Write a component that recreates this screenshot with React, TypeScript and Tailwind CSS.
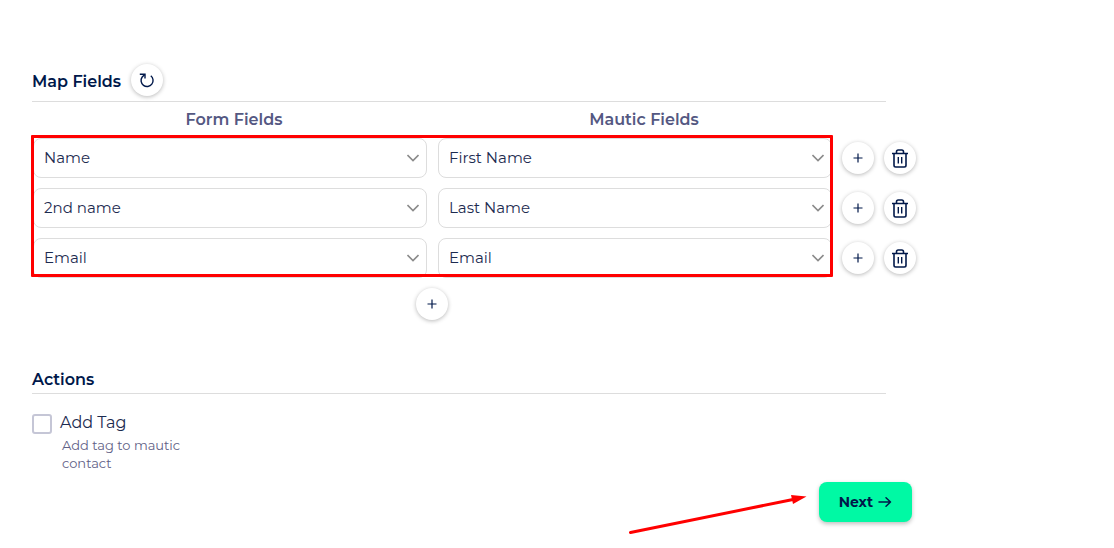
import type { ButtonHTMLAttributes } from 'react';

const rows = [
  { form: 'Name', mautic: 'First Name' },
  { form: '2nd name', mautic: 'Last Name' },
  { form: 'Email', mautic: 'Email' },
];
const formFields = ['Name', '2nd name', 'Email'];
const mauticFields = ['First Name', 'Last Name', 'Email'];

function RoundButton({ children, ...rest }: ButtonHTMLAttributes<HTMLButtonElement>) {
  return (
    <button
      type="button"
      className="flex size-8 shrink-0 items-center justify-center rounded-full bg-white text-[#00184a] shadow-[0_1px_4px_rgba(0,0,0,0.28)]"
      {...rest}
    >
      {children}
    </button>
  );
}

function PlusIcon() {
  return (
    <svg width="10" height="10" viewBox="0 0 10 10" stroke="currentColor" strokeWidth="1.2" aria-hidden="true">
      <path d="M5 .5v9M.5 5h9" />
    </svg>
  );
}

function RefreshIcon() {
  return (
    <svg width="16" height="16" viewBox="0 0 16 16" fill="none" stroke="currentColor" strokeWidth="1.4" aria-hidden="true">
      <path d="M11.800 3.800a6 6 0 1 1-8.600 1.200L5.800 2.400" />
      <path d="M.8 2.300h5.200v4.200" />
    </svg>
  );
}

function TrashIcon() {
  return (
    <svg width="18" height="20" viewBox="0 0 18 20" fill="none" stroke="currentColor" strokeWidth="1.6" aria-hidden="true">
      <path d="M1 5.500h16M5.500 5.500V3.700q0-1.700 1.700-1.700h3.600q1.700 0 1.700 1.700V5.500M3 5.500v11.800q0 1.700 1.700 1.700h8.600q1.700 0 1.700-1.700V5.500" />
      <path d="M7.300 9v6.500M10.700 9v6.500" strokeWidth="1.4" />
    </svg>
  );
}

function FieldSelect({ label, value, options }: { label: string; value: string; options: string[] }) {
  return (
    <div className="relative min-w-0 flex-1">
      <select
        aria-label={label}
        defaultValue={value}
        className="h-10 w-full appearance-none rounded-lg border border-[#dddddd] bg-white pr-8 pl-[10px] text-[15px] font-normal text-[#1c2b50]"
      >
        {options.map((option) => (
          <option key={option}>{option}</option>
        ))}
      </select>
      <svg
        className="pointer-events-none absolute top-4 right-2 text-[#8b8b8b]"
        width="12"
        height="8"
        viewBox="0 0 12 8"
        fill="none"
        stroke="currentColor"
        strokeWidth="1.6"
        aria-hidden="true"
      >
        <path d="M.5 1 6 6.5 11.5 1" />
      </svg>
    </div>
  );
}

export default function App() {
  return (
    <main className="relative min-h-screen bg-white px-8 pt-16 pb-6 font-['Montserrat','Inter',sans-serif] text-[#00184a]">
      <section>
        <div className="flex max-w-[854px] items-center gap-[10px] border-b border-[#dddddd] pb-[5px]">
          <h2 className="pt-1 text-base leading-6 font-semibold">Map Fields</h2>
          <RoundButton aria-label="Refresh fields">
            <RefreshIcon />
          </RoundButton>
        </div>
        <div className="flex max-w-[814px] gap-[6px] pt-[6px] pb-[6px] text-center text-base leading-6 font-semibold text-[#545882]">
          <div className="flex-1">Form Fields</div>
          <div className="flex-1">Mautic Fields</div>
        </div>
        <div className="relative flex max-w-[884px] flex-col gap-[10px] pl-px">
          {rows.map((row, index) => (
            <div key={row.form} className="flex items-center gap-[10px]">
              <div className="flex min-w-0 flex-1 gap-[11px]">
                <FieldSelect label={`Form field ${index + 1}`} value={row.form} options={formFields} />
                <FieldSelect label={`Mautic field ${index + 1}`} value={row.mautic} options={mauticFields} />
              </div>
              <RoundButton aria-label="Add row below">
                <PlusIcon />
              </RoundButton>
              <RoundButton aria-label="Delete row">
                <TrashIcon />
              </RoundButton>
            </div>
          ))}
          <div className="pointer-events-none absolute -top-[3px] right-[83px] bottom-px -left-px rounded-[1px] border-3 border-[#ff0000]" />
        </div>
        <div className="flex max-w-[800px] justify-center pt-[10px]">
          <RoundButton aria-label="Add row">
            <PlusIcon />
          </RoundButton>
        </div>
      </section>

      <section className="pt-12">
        <h2 className="max-w-[854px] border-b border-[#dddddd] pb-px text-base leading-6 font-semibold">Actions</h2>
        <div className="flex gap-2 pt-4">
          <input
            id="add-tag"
            type="checkbox"
            aria-describedby="add-tag-help"
            className="mt-1 size-5 shrink-0 appearance-none rounded-[3px] border-2 border-[#c5c6d6] bg-white checked:bg-[#00f9a4]"
          />
          <div>
            <label htmlFor="add-tag" className="block pt-px text-base leading-6 font-normal text-[#1c2b50]">
              Add Tag
            </label>
            <p id="add-tag-help" className="max-w-[144px] pt-px pl-[2px] text-[13px] leading-[18px] text-[#5f6186]">
              Add tag to mautic contact
            </p>
          </div>
        </div>
      </section>

      <div className="flex max-w-[880px] justify-end pt-[10px]">
        <button
          type="button"
          className="flex h-10 items-center gap-[5px] rounded-lg bg-[#00f9a4] px-5 text-[14px] font-bold shadow-[0_2px_4px_rgba(0,0,0,0.25)]"
        >
          Next
          <svg width="14" height="12" viewBox="0 0 14 12" fill="none" stroke="currentColor" strokeWidth="1.5" strokeLinecap="round" strokeLinejoin="round" aria-hidden="true">
            <path d="M1 6h11.500M8 1.800 12.500 6 8 10.200" />
          </svg>
        </button>
      </div>

      <svg className="pointer-events-none absolute top-[490px] left-[625px]" width="185" height="48" viewBox="0 0 185 48" aria-hidden="true">
        <path d="M5.500 42.500 168 9.500" stroke="#ff0000" strokeWidth="3" strokeLinecap="round" />
        <path d="M181.500 6.500 166 5l2 9Z" fill="#ff0000" />
      </svg>
    </main>
  );
}
